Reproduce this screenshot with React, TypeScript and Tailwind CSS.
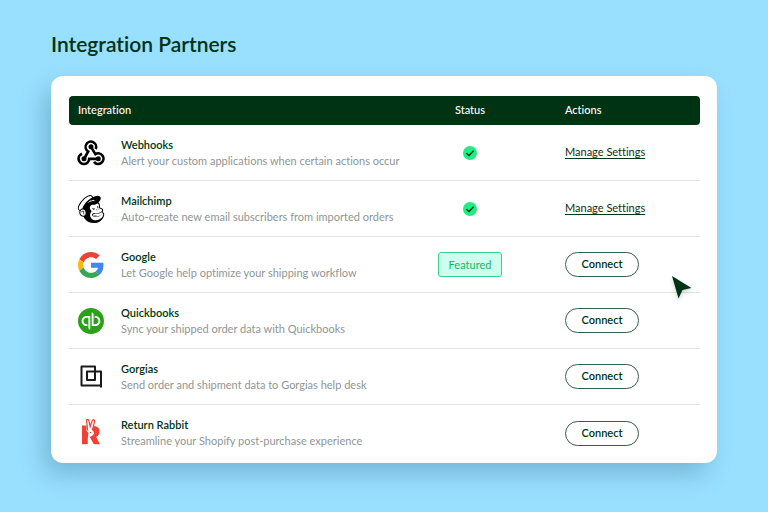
import type { ReactNode } from 'react'
import { SiMailchimp, SiQuickbooks } from 'react-icons/si'

type Integration = {
  name: string
  description: string
  icon: ReactNode
  status?: 'active' | 'featured'
}

function WebhookIcon() {
  return (
    <svg viewBox="0 0 28 28" className="size-7" fill="none" stroke="black" strokeWidth="2.6" aria-hidden="true">
      <path d="M18.8 9.9A5.3 5.3 0 1 0 11.2 12.5L7.3 19.5" />
      <path d="M5 14.7A5.3 5.3 0 1 0 12.2 19.9H21" />
      <path d="M17 22.9A5.3 5.3 0 1 0 18.4 15.1L14 7.9" />
      <g fill="black" stroke="none">
        <circle cx="14" cy="7.8" r="2.5" />
        <circle cx="7" cy="19.8" r="2.5" />
        <circle cx="21.3" cy="19.8" r="2.5" />
      </g>
    </svg>
  )
}

function GoogleIcon() {
  return (
    <svg viewBox="0 0 48 48" className="size-[26px]" aria-hidden="true">
      <path fill="#EA4335" d="M24 9.5c3.54 0 6.71 1.22 9.21 3.6l6.85-6.85C35.9 2.38 30.47 0 24 0 14.62 0 6.51 5.38 2.56 13.22l7.98 6.19C12.43 13.72 17.74 9.5 24 9.5z" />
      <path fill="#4285F4" d="M46.98 24.55c0-1.57-.15-3.09-.38-4.55H24v9.02h12.94c-.58 2.96-2.26 5.48-4.78 7.18l7.73 6c4.51-4.18 7.09-10.36 7.09-17.65z" />
      <path fill="#FBBC05" d="M10.53 28.59c-.48-1.45-.76-2.99-.76-4.59s.27-3.14.76-4.59l-7.98-6.19C.92 16.46 0 20.12 0 24c0 3.88.92 7.54 2.56 10.78l7.97-6.19z" />
      <path fill="#34A853" d="M24 48c6.48 0 11.93-2.13 15.89-5.81l-7.73-6c-2.15 1.45-4.92 2.3-8.16 2.3-6.26 0-11.57-4.22-13.47-9.91l-7.98 6.19C6.51 42.62 14.62 48 24 48z" />
    </svg>
  )
}

function GorgiasIcon() {
  return (
    <svg viewBox="0 0 28 28" className="size-7" fill="none" stroke="#1a1a1a" strokeWidth="2" strokeLinejoin="round" aria-hidden="true">
      <path d="M24 24.5V8.5H10V17H18V3.5H4.5V22.5H24" />
    </svg>
  )
}

function RabbitIcon() {
  return (
    <svg viewBox="0 0 28 28" className="size-7" fill="#ef4136" aria-hidden="true">
      <path d="M5 6.5H9.5V12L11.5 14L10.8 19V25.3H5Z" />
      <path d="M17.5 7C21 7.5 22.6 9.5 22.6 12.3C22.6 15 21.2 16.9 19.2 17.9L23 25.3H16.8L12.8 18L15.5 16.5C17 15.5 17.6 14 16.3 12.3L14.6 10.5Z" />
      <path
        d="M10.6 11.5L9.6 1.2C9.6 -.1 11.4 .1 11.8 1.3L13.2 7.5L15.2 1.7C15.7 .4 17.8 .7 17.6 2.3L15.6 10.5"
        fill="none"
        stroke="#ef4136"
        strokeWidth="1.2"
      />
      <circle cx="13.6" cy="13.5" r=".8" />
    </svg>
  )
}

const integrations: Integration[] = [
  {
    name: 'Webhooks',
    description: 'Alert your custom applications when certain actions occur',
    icon: <WebhookIcon />,
    status: 'active',
  },
  {
    name: 'Mailchimp',
    description: 'Auto-create new email subscribers from imported orders',
    icon: <SiMailchimp className="size-7 text-black" />,
    status: 'active',
  },
  {
    name: 'Google',
    description: 'Let Google help optimize your shipping workflow',
    icon: <GoogleIcon />,
    status: 'featured',
  },
  {
    name: 'Quickbooks',
    description: 'Sync your shipped order data with Quickbooks',
    icon: <SiQuickbooks className="size-[26px] text-[#2ca01c]" />,
  },
  {
    name: 'Gorgias',
    description: 'Send order and shipment data to Gorgias help desk',
    icon: <GorgiasIcon />,
  },
  {
    name: 'Return Rabbit',
    description: 'Streamline your Shopify post-purchase experience',
    icon: <RabbitIcon />,
  },
]

function Status({ status }: { status: Integration['status'] }) {
  if (status === 'active') {
    return (
      <svg viewBox="0 0 14 14" className="mx-auto size-3.5" role="img" aria-label="Active">
        <circle cx="7" cy="7" r="7" fill="#1fed83" />
        <path d="M3.4 7.2L6 9.5L10.6 4.7" fill="none" stroke="#003314" strokeWidth="1.4" />
      </svg>
    )
  }
  if (status === 'featured') {
    return (
      <span className="inline-block rounded-[3px] border border-[#3fcf8c] bg-[#ccffee] px-2.5 text-[11px] leading-[23px] text-[#18b566]">
        Featured
      </span>
    )
  }
  return null
}

export default function App() {
  return (
    <main className="min-h-screen bg-[#99dfff] px-[51px] pt-[29px] pb-12 font-['Lato','Liberation_Sans',sans-serif] text-[#003314] [font-variant-ligatures:none]">
      <h1 className="text-[21px] leading-[30px] font-semibold">Integration Partners</h1>

      <section className="relative mt-[17px] rounded-xl bg-white pt-5 pr-[17px] pb-[2px] pl-[18px] shadow-[-8px_12px_24px_-2px_rgba(0,50,80,0.25)]">
        <table className="w-full table-fixed border-separate border-spacing-0 text-left text-[11px]">
          <colgroup>
            <col />
            <col className="w-[130px]" />
            <col className="w-[165px]" />
          </colgroup>
          <thead>
            <tr className="h-[29px] text-white">
              <th className="rounded-l bg-[#003314] pl-[9px] font-medium">Integration</th>
              <th className="bg-[#003314] text-center font-medium">Status</th>
              <th className="rounded-r bg-[#003314] pl-[30px] font-medium">Actions</th>
            </tr>
          </thead>
          <tbody>
            {integrations.map((item) => (
              <tr key={item.name} className="group h-14">
                <td className="border-b border-[#e3e5e4] group-last:border-0">
                  <div className="flex items-center gap-4 pl-2">
                    <div className="flex size-7 shrink-0 items-center justify-center">{item.icon}</div>
                    <div className="leading-4">
                      <div className="font-semibold">{item.name}</div>
                      <div className="whitespace-nowrap text-[#8f9693]">{item.description}</div>
                    </div>
                  </div>
                </td>
                <td className="border-b border-[#e3e5e4] text-center group-last:border-0">
                  <Status status={item.status} />
                </td>
                <td className="border-b border-[#e3e5e4] pl-[30px] group-last:border-0">
                  {item.status === 'active' ? (
                    <a href="#" className="underline underline-offset-2">
                      Manage Settings
                    </a>
                  ) : (
                    <button
                      type="button"
                      className="h-[25px] w-[74px] rounded-full border border-[#336047] font-semibold"
                    >
                      Connect
                    </button>
                  )}
                </td>
              </tr>
            ))}
          </tbody>
        </table>

        {/* Pointer */}
        <svg
          viewBox="0 0 20 23"
          className="absolute top-[200px] right-[25px] h-[23px] w-5 drop-shadow-[0_2px_2px_rgba(0,0,0,0.2)]"
          fill="#003314"
          aria-hidden="true"
        >
          <path d="M0 0L19.5 12L10.5 14L6.5 22.5Z" />
        </svg>
      </section>
    </main>
  )
}
